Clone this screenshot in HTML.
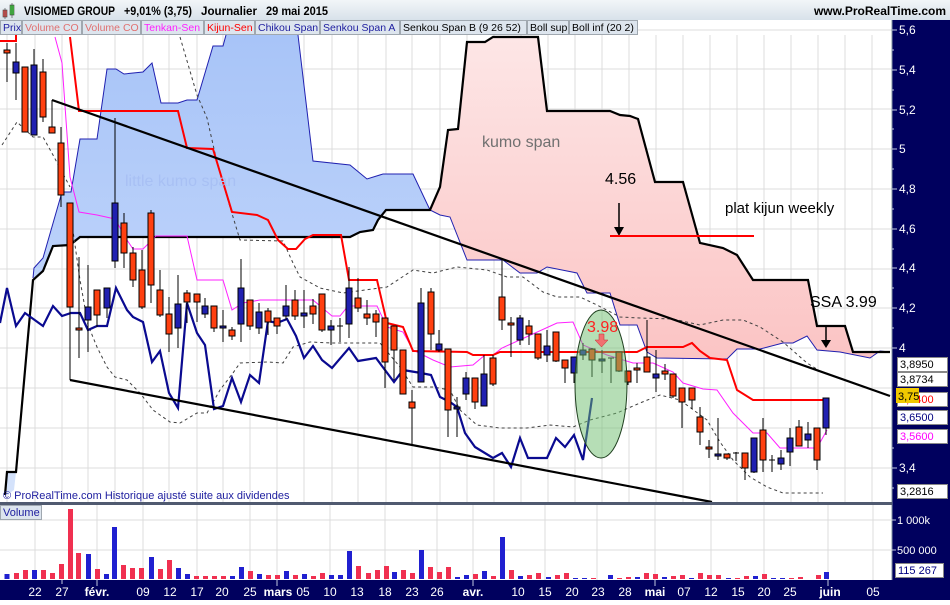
<!DOCTYPE html>
<html><head><meta charset="utf-8"><style>
body{margin:0;width:950px;height:600px;overflow:hidden;background:#fff;font-family:"Liberation Sans",Arial,sans-serif}
</style></head><body>
<svg width="950" height="600" xmlns="http://www.w3.org/2000/svg" font-family="Liberation Sans, Arial, sans-serif">
<defs>
<linearGradient id="hd" x1="0" y1="0" x2="0" y2="1"><stop offset="0" stop-color="#f2f6f8"/><stop offset="1" stop-color="#d8e2ea"/></linearGradient>
<linearGradient id="pk" x1="0" y1="0" x2="0" y2="1"><stop offset="0" stop-color="#fde6e6"/><stop offset="1" stop-color="#fbc4c4"/></linearGradient>
<linearGradient id="bl" x1="0" y1="0" x2="0" y2="1"><stop offset="0" stop-color="#a8c4f8"/><stop offset="1" stop-color="#bcd2fa"/></linearGradient>
</defs>
<rect x="0" y="0" width="950" height="600" fill="#fff"/>
<!-- header -->
<rect x="0" y="0" width="950" height="20" fill="url(#hd)"/>
<rect x="3" y="10" width="4" height="7" fill="#e05050" stroke="#404040" stroke-width="0.6"/><line x1="5" y1="8" x2="5" y2="19" stroke="#404040" stroke-width="0.6"/>
<rect x="10" y="5" width="4" height="10" fill="#40d040" stroke="#404040" stroke-width="0.6"/><line x1="12" y1="3" x2="12" y2="18" stroke="#404040" stroke-width="0.6"/>
<g font-size="12" font-weight="bold" fill="#000">
<text x="24" y="15" textLength="91" lengthAdjust="spacingAndGlyphs">VISIOMED GROUP</text>
<text x="124" y="15" textLength="68" lengthAdjust="spacingAndGlyphs">+9,01% (3,75)</text>
<text x="201" y="15" textLength="56" lengthAdjust="spacingAndGlyphs">Journalier</text>
<text x="266" y="15" textLength="62" lengthAdjust="spacingAndGlyphs">29 mai 2015</text>
</g>
<text x="946" y="15" font-size="12" font-weight="bold" fill="#000" text-anchor="end">www.ProRealTime.com</text>
<rect x="0" y="20" width="950" height="15" fill="#fff"/>
<!-- grid -->
<g stroke="#dcdcdc" stroke-width="1">
<line x1="0" y1="30" x2="892" y2="30"/><line x1="0" y1="69" x2="892" y2="69"/><line x1="0" y1="109" x2="892" y2="109"/><line x1="0" y1="149" x2="892" y2="149"/><line x1="0" y1="189" x2="892" y2="189"/><line x1="0" y1="229" x2="892" y2="229"/><line x1="0" y1="269" x2="892" y2="269"/><line x1="0" y1="308" x2="892" y2="308"/><line x1="0" y1="348" x2="892" y2="348"/><line x1="0" y1="388" x2="892" y2="388"/><line x1="0" y1="428" x2="892" y2="428"/><line x1="0" y1="468" x2="892" y2="468"/>
<line x1="7" y1="35" x2="7" y2="502"/><line x1="35" y1="35" x2="35" y2="502"/><line x1="62" y1="35" x2="62" y2="502"/><line x1="88" y1="35" x2="88" y2="502"/><line x1="115" y1="35" x2="115" y2="502"/><line x1="143" y1="35" x2="143" y2="502"/><line x1="169" y1="35" x2="169" y2="502"/><line x1="197" y1="35" x2="197" y2="502"/><line x1="223" y1="35" x2="223" y2="502"/><line x1="250" y1="35" x2="250" y2="502"/><line x1="277" y1="35" x2="277" y2="502"/><line x1="304" y1="35" x2="304" y2="502"/><line x1="332" y1="35" x2="332" y2="502"/><line x1="358" y1="35" x2="358" y2="502"/><line x1="386" y1="35" x2="386" y2="502"/><line x1="412" y1="35" x2="412" y2="502"/><line x1="440" y1="35" x2="440" y2="502"/><line x1="467" y1="35" x2="467" y2="502"/><line x1="494" y1="35" x2="494" y2="502"/><line x1="521" y1="35" x2="521" y2="502"/><line x1="548" y1="35" x2="548" y2="502"/><line x1="575" y1="35" x2="575" y2="502"/><line x1="602" y1="35" x2="602" y2="502"/><line x1="629" y1="35" x2="629" y2="502"/><line x1="656" y1="35" x2="656" y2="502"/><line x1="683" y1="35" x2="683" y2="502"/><line x1="710" y1="35" x2="710" y2="502"/><line x1="737" y1="35" x2="737" y2="502"/><line x1="764" y1="35" x2="764" y2="502"/><line x1="791" y1="35" x2="791" y2="502"/><line x1="818" y1="35" x2="818" y2="502"/><line x1="845" y1="35" x2="845" y2="502"/><line x1="872" y1="35" x2="872" y2="502"/>
</g>
<!-- blue kumo -->
<polygon fill="url(#bl)" points="33,278 34,268 43,258 62,192 71,192 80,139 97,139 107,69 116,69 124,74 143,72 152,63 161,103 178,103 187,100 197,100 213,46 223,46 226,35 298,35 313,161 350,165 367,179 383,174 413,174 430,210 386,210 378,220 373,230 360,232 350,237 80,237 70,245 53,246 43,271"/>
<polygon fill="#d4e2fb" points="7,472 16,472 14,490 7,495"/>
<!-- pink kumo -->
<polygon fill="url(#pk)" points="430,210 440,187 448,130 458,129 467,42 485,42 493,37 538,37 547,111 610,111 620,115 630,116 638,119 655,182 683,182 700,243 723,248 737,255 753,280 808,280 817,326 845,326 853,352 890,352 880,351 870,358 840,352 817,350 807,336 793,343 783,343 760,349 737,349 727,359 657,358 647,352 637,325 620,325 610,293 587,293 577,273 547,267 537,273 520,273 503,260 467,260 450,217 440,215"/>
<!-- SSA blue line -->
<polyline fill="none" stroke="#2020b0" stroke-width="1" points="33,278 34,268 43,258 62,192 71,192 80,139 97,139 107,69 116,69 124,74 143,72 152,63 161,103 178,103 187,100 197,100 213,46 223,46 226,35"/>
<polyline fill="none" stroke="#2020b0" stroke-width="1" points="298,35 313,161 350,165 367,179 383,174 413,174 430,210 440,215 450,217 467,260 503,260 520,273 537,273 547,267 577,273 587,293 610,293 620,325 637,325 647,352 657,358 727,359 737,349 760,349 783,343 793,343 807,336 817,350 840,352 870,358 880,351 890,352"/>
<!-- SSB black -->
<polyline fill="none" stroke="#000" stroke-width="2.2" points="5,495 7,472 16,472 33,280 43,271 53,246 70,245 80,237 350,237 360,232 373,230 378,220 386,210 430,210 440,187 448,130 458,129 467,42 485,42 493,37 538,37 547,111 610,111 620,115 630,116 638,119 655,182 683,182 700,243 723,248 737,255 753,280 808,280 817,326 845,326 853,352 890,352"/>
<!-- bollinger -->
<polyline fill="none" stroke="#404040" stroke-width="1" stroke-dasharray="3,3" points="2,145 17,122 33,137 43,137 53,155 70,187"/>
<polyline fill="none" stroke="#404040" stroke-width="1" stroke-dasharray="3,3" points="180,37 197,95 207,118 217,162 230,207 240,240 283,241 293,263 300,277 320,288 343,293 387,287 413,270 433,273 457,267 487,270 507,277 523,277 543,292 557,297 580,297 597,305 620,317 640,318 673,319 700,325 723,320 743,320 760,327 783,342 807,363 823,373"/>
<polyline fill="none" stroke="#404040" stroke-width="1" stroke-dasharray="3,3" points="70,210 80,280 88,325 97,347 107,367 115,377 127,380 140,393 153,410 170,422 180,423 197,413 207,413 220,390 233,373 240,363 267,362 283,363 293,347 310,342 333,343 380,343 400,367 413,387 433,387 450,390 460,410 477,425 500,428 527,428 550,425 573,427 590,420 617,413 640,403 660,395 680,400 707,420 720,442 733,460 750,477 767,487 783,493 823,493"/>
<!-- tenkan -->
<polyline fill="none" stroke="#ff20ff" stroke-width="1" points="55,37 62,63 70,177 79,212 97,215 115,219 127,240 133,249 143,249 156,236 187,236 197,280 223,280 232,310 243,303 260,300 313,300 332,316 340,316 348,306 377,306 387,327 403,332 413,350 433,360 450,367 473,365 485,355 493,355 502,348 557,323 573,322 583,345 607,355 633,363 653,363 673,372 683,383 703,389 717,390 733,413 753,433 767,433 780,448 817,448 827,430"/>
<!-- kijun -->
<polyline fill="none" stroke="#ff0000" stroke-width="2" points="0,41 16,41 16,33"/>
<polyline fill="none" stroke="#ff0000" stroke-width="2" points="70,37 79,111 178,111 187,148 213,149 232,212 257,215 268,220 278,240 288,249 296,249 305,239 313,235 341,235 349,280 377,280 387,323 403,327 413,351 467,352 473,355 493,355 500,352 637,352 647,347 683,347 692,343 700,351 710,358 727,360 737,390 753,400 827,400"/>
<!-- chikou -->
<polyline fill="none" stroke="#0a0a90" stroke-width="2.2" points="0,323 7,288 16,326 25,313 43,326 53,306 62,316 71,313 80,313 88,330 97,326 107,326 116,288 127,310 133,317 143,322 152,362 160,351 169,393 178,408 187,303 197,333 205,345 214,409 223,406 232,378 241,402 250,375 259,383 268,321 277,323 287,319 296,336 304,358 313,346 322,360 332,368 349,348 358,361 376,358 394,382 403,370 421,373 431,375 440,397 450,402 457,407 465,433 475,447 493,458 502,453 511,467 520,438 528,458 547,458 556,438 565,447 574,435 583,460 592,398"/>
<!-- trendlines -->
<line x1="52" y1="100" x2="890" y2="396" stroke="#000" stroke-width="2.2"/>
<line x1="70" y1="380" x2="712" y2="502" stroke="#000" stroke-width="2.2"/>
<!-- candles -->
<g stroke="#000" stroke-width="1">
<line x1="7" y1="43" x2="7" y2="82"/><rect x="4" y="50" width="6" height="3" fill="#ff4010"/>
<line x1="16" y1="43" x2="16" y2="100"/><rect x="13" y="62" width="6" height="11" fill="#2020b0"/>
<line x1="25" y1="67" x2="25" y2="132"/><rect x="22" y="67" width="6" height="65" fill="#ff4010"/>
<line x1="34" y1="49" x2="34" y2="135"/><rect x="31" y="65" width="6" height="70" fill="#2020b0"/>
<line x1="43" y1="59" x2="43" y2="122"/><rect x="40" y="72" width="6" height="45" fill="#ff4010"/>
<line x1="52" y1="100" x2="52" y2="133"/><rect x="49" y="127" width="6" height="6" fill="#ff4010"/>
<line x1="61" y1="127" x2="61" y2="207"/><rect x="58" y="143" width="6" height="52" fill="#ff4010"/>
<line x1="70" y1="203" x2="70" y2="380"/><rect x="67" y="203" width="6" height="104" fill="#ff4010"/>
<line x1="79" y1="257" x2="79" y2="358"/><rect x="76" y="328" width="6" height="2" fill="#ff4010"/>
<line x1="88" y1="265" x2="88" y2="352"/><rect x="85" y="307" width="6" height="13" fill="#2020b0"/>
<line x1="97" y1="290" x2="97" y2="327"/><rect x="94" y="290" width="6" height="25" fill="#ff4010"/>
<line x1="107" y1="288" x2="107" y2="318"/><rect x="104" y="288" width="6" height="20" fill="#2020b0"/>
<line x1="115" y1="118" x2="115" y2="268"/><rect x="112" y="203" width="6" height="58" fill="#2020b0"/>
<line x1="124" y1="213" x2="124" y2="268"/><rect x="121" y="223" width="6" height="30" fill="#ff4010"/>
<line x1="133" y1="247" x2="133" y2="287"/><rect x="130" y="253" width="6" height="27" fill="#ff4010"/>
<line x1="142" y1="250" x2="142" y2="309"/><rect x="139" y="270" width="6" height="37" fill="#ff4010"/>
<line x1="151" y1="210" x2="151" y2="303"/><rect x="148" y="213" width="6" height="72" fill="#ff4010"/>
<line x1="160" y1="270" x2="160" y2="317"/><rect x="157" y="290" width="6" height="25" fill="#ff4010"/>
<line x1="169" y1="297" x2="169" y2="352"/><rect x="166" y="314" width="6" height="20" fill="#ff4010"/>
<line x1="178" y1="275" x2="178" y2="348"/><rect x="175" y="304" width="6" height="24" fill="#2020b0"/>
<line x1="187" y1="290" x2="187" y2="323"/><rect x="184" y="293" width="6" height="9" fill="#ff4010"/>
<line x1="197" y1="294" x2="197" y2="322"/><rect x="194" y="294" width="6" height="8" fill="#ff4010"/>
<line x1="205" y1="298" x2="205" y2="318"/><rect x="202" y="306" width="6" height="8" fill="#2020b0"/>
<line x1="214" y1="306" x2="214" y2="332"/><rect x="211" y="306" width="6" height="22" fill="#ff4010"/>
<line x1="223" y1="310" x2="223" y2="342"/><rect x="220" y="326" width="6" height="2" fill="#2020b0"/>
<line x1="232" y1="327" x2="232" y2="340"/><rect x="229" y="330" width="6" height="6" fill="#ff4010"/>
<line x1="241" y1="259" x2="241" y2="342"/><rect x="238" y="288" width="6" height="36" fill="#2020b0"/>
<line x1="250" y1="300" x2="250" y2="330"/><rect x="247" y="300" width="6" height="26" fill="#ff4010"/>
<line x1="259" y1="303" x2="259" y2="334"/><rect x="256" y="312" width="6" height="16" fill="#2020b0"/>
<line x1="268" y1="308" x2="268" y2="335"/><rect x="265" y="311" width="6" height="11" fill="#ff4010"/>
<line x1="277" y1="318" x2="277" y2="334"/><rect x="274" y="318" width="6" height="8" fill="#ff4010"/>
<line x1="286" y1="285" x2="286" y2="320"/><rect x="283" y="306" width="6" height="10" fill="#2020b0"/>
<line x1="295" y1="290" x2="295" y2="320"/><rect x="292" y="300" width="6" height="16" fill="#ff4010"/>
<line x1="304" y1="290" x2="304" y2="328"/><rect x="301" y="313" width="6" height="3" fill="#2020b0"/>
<line x1="313" y1="299" x2="313" y2="324"/><rect x="310" y="306" width="6" height="8" fill="#ff4010"/>
<line x1="322" y1="294" x2="322" y2="332"/><rect x="319" y="294" width="6" height="36" fill="#ff4010"/>
<line x1="331" y1="320" x2="331" y2="345"/><rect x="328" y="326" width="6" height="4" fill="#2020b0"/>
<line x1="340" y1="318" x2="340" y2="342"/><line x1="337" y1="326" x2="343" y2="326"/>
<line x1="349" y1="267" x2="349" y2="338"/><rect x="346" y="288" width="6" height="36" fill="#2020b0"/>
<line x1="358" y1="278" x2="358" y2="312"/><rect x="355" y="298" width="6" height="10" fill="#ff4010"/>
<line x1="367" y1="300" x2="367" y2="325"/><rect x="364" y="314" width="6" height="4" fill="#ff4010"/>
<line x1="376" y1="310" x2="376" y2="337"/><rect x="373" y="314" width="6" height="8" fill="#ff4010"/>
<line x1="385" y1="318" x2="385" y2="388"/><rect x="382" y="318" width="6" height="44" fill="#ff4010"/>
<line x1="394" y1="326" x2="394" y2="380"/><rect x="391" y="326" width="6" height="24" fill="#ff4010"/>
<line x1="403" y1="350" x2="403" y2="394"/><rect x="400" y="350" width="6" height="44" fill="#ff4010"/>
<line x1="412" y1="390" x2="412" y2="445"/><rect x="409" y="402" width="6" height="6" fill="#ff4010"/>
<line x1="421" y1="288" x2="421" y2="382"/><rect x="418" y="303" width="6" height="79" fill="#2020b0"/>
<line x1="431" y1="288" x2="431" y2="350"/><rect x="428" y="292" width="6" height="42" fill="#ff4010"/>
<line x1="439" y1="330" x2="439" y2="352"/><rect x="436" y="344" width="6" height="6" fill="#2020b0"/>
<line x1="448" y1="349" x2="448" y2="437"/><rect x="445" y="349" width="6" height="61" fill="#ff4010"/>
<line x1="457" y1="397" x2="457" y2="437"/><rect x="454" y="407" width="6" height="2" fill="#2020b0"/>
<line x1="466" y1="372" x2="466" y2="400"/><rect x="463" y="378" width="6" height="16" fill="#2020b0"/>
<line x1="475" y1="378" x2="475" y2="409"/><rect x="472" y="378" width="6" height="24" fill="#ff4010"/>
<line x1="484" y1="355" x2="484" y2="406"/><rect x="481" y="374" width="6" height="32" fill="#2020b0"/>
<line x1="493" y1="355" x2="493" y2="386"/><rect x="490" y="358" width="6" height="26" fill="#ff4010"/>
<line x1="502" y1="260" x2="502" y2="330"/><rect x="499" y="297" width="6" height="23" fill="#ff4010"/>
<line x1="511" y1="317" x2="511" y2="357"/><rect x="508" y="323" width="6" height="2" fill="#ff4010"/>
<line x1="520" y1="315" x2="520" y2="345"/><rect x="517" y="318" width="6" height="22" fill="#2020b0"/>
<line x1="529" y1="320" x2="529" y2="345"/><rect x="526" y="326" width="6" height="8" fill="#ff4010"/>
<line x1="538" y1="334" x2="538" y2="360"/><rect x="535" y="334" width="6" height="24" fill="#ff4010"/>
<line x1="547" y1="330" x2="547" y2="362"/><rect x="544" y="346" width="6" height="9" fill="#2020b0"/>
<line x1="556" y1="332" x2="556" y2="362"/><rect x="553" y="332" width="6" height="29" fill="#ff4010"/>
<line x1="565" y1="360" x2="565" y2="383"/><rect x="562" y="360" width="6" height="8" fill="#ff4010"/>
<line x1="574" y1="357" x2="574" y2="383"/><rect x="571" y="357" width="6" height="16" fill="#2020b0"/>
<line x1="583" y1="343" x2="583" y2="360"/><rect x="580" y="350" width="6" height="5" fill="#2020b0"/>
<line x1="592" y1="348" x2="592" y2="377"/><rect x="589" y="349" width="6" height="11" fill="#ff4010"/>
<line x1="602" y1="350" x2="602" y2="373"/><rect x="599" y="359" width="6" height="2" fill="#2020b0"/>
<line x1="611" y1="358" x2="611" y2="383"/><line x1="608" y1="358" x2="614" y2="358"/>
<line x1="619" y1="352" x2="619" y2="372"/><rect x="616" y="352" width="6" height="19" fill="#ff4010"/>
<line x1="628" y1="371" x2="628" y2="385"/><rect x="625" y="371" width="6" height="11" fill="#ff4010"/>
<line x1="637" y1="363" x2="637" y2="383"/><rect x="634" y="368" width="6" height="2" fill="#ff4010"/>
<line x1="647" y1="320" x2="647" y2="372"/><rect x="644" y="357" width="6" height="15" fill="#ff4010"/>
<line x1="656" y1="350" x2="656" y2="392"/><rect x="653" y="374" width="6" height="4" fill="#2020b0"/>
<line x1="665" y1="364" x2="665" y2="380"/><rect x="662" y="371" width="6" height="3" fill="#ff4010"/>
<line x1="673" y1="374" x2="673" y2="398"/><rect x="670" y="374" width="6" height="22" fill="#ff4010"/>
<line x1="682" y1="388" x2="682" y2="428"/><rect x="679" y="388" width="6" height="14" fill="#ff4010"/>
<line x1="692" y1="388" x2="692" y2="409"/><rect x="689" y="388" width="6" height="12" fill="#ff4010"/>
<line x1="700" y1="407" x2="700" y2="445"/><rect x="697" y="417" width="6" height="15" fill="#ff4010"/>
<line x1="709" y1="440" x2="709" y2="458"/><rect x="706" y="447" width="6" height="2" fill="#ff4010"/>
<line x1="718" y1="418" x2="718" y2="460"/><rect x="715" y="454" width="6" height="2" fill="#2020b0"/>
<line x1="727" y1="454" x2="727" y2="460"/><rect x="724" y="454" width="6" height="4" fill="#ff4010"/>
<line x1="736" y1="452" x2="736" y2="461"/><line x1="733" y1="453" x2="739" y2="453"/>
<line x1="745" y1="453" x2="745" y2="480"/><rect x="742" y="453" width="6" height="15" fill="#ff4010"/>
<line x1="754" y1="438" x2="754" y2="473"/><rect x="751" y="438" width="6" height="34" fill="#2020b0"/>
<line x1="763" y1="418" x2="763" y2="472"/><rect x="760" y="430" width="6" height="30" fill="#ff4010"/>
<line x1="772" y1="455" x2="772" y2="472"/><line x1="769" y1="460" x2="775" y2="460"/>
<line x1="781" y1="450" x2="781" y2="470"/><rect x="778" y="458" width="6" height="6" fill="#2020b0"/>
<line x1="790" y1="428" x2="790" y2="466"/><rect x="787" y="438" width="6" height="14" fill="#2020b0"/>
<line x1="799" y1="420" x2="799" y2="446"/><rect x="796" y="427" width="6" height="19" fill="#ff4010"/>
<line x1="808" y1="422" x2="808" y2="448"/><rect x="805" y="434" width="6" height="6" fill="#2020b0"/>
<line x1="817" y1="428" x2="817" y2="470"/><rect x="814" y="428" width="6" height="32" fill="#ff4010"/>
<line x1="826" y1="398" x2="826" y2="435"/><rect x="823" y="398" width="6" height="30" fill="#2020b0"/>
</g>
<!-- annotations -->
<text x="125" y="186" font-size="16" fill="#a8c0f4">little kumo span</text>
<text x="482" y="147" font-size="16" fill="#707070">kumo span</text>
<text x="605" y="184" font-size="16" fill="#000">4.56</text>
<line x1="619" y1="203" x2="619" y2="232" stroke="#000" stroke-width="1.5"/><polygon points="614,227 624,227 619,236" fill="#000"/>
<line x1="610" y1="236" x2="754" y2="236" stroke="#ff0000" stroke-width="2"/>
<text x="725" y="213" font-size="15" fill="#000">plat kijun weekly</text>
<text x="810" y="307" font-size="16" fill="#000">SSA 3.99</text>
<line x1="826" y1="327" x2="826" y2="344" stroke="#000" stroke-width="1.5"/><polygon points="821,340 831,340 826,348" fill="#000"/>
<ellipse cx="601" cy="384" rx="26" ry="74" fill="rgba(110,190,110,0.5)" stroke="#204020" stroke-width="1"/>
<text x="587" y="332" font-size="16" fill="#ff2020">3.98</text>
<polygon points="599,334 604,334 604,340 608,340 601.5,347 595,340 599,340" fill="#f07070" stroke="#c03030" stroke-width="0.5"/>
<!-- legend row -->
<g font-size="10.5">
<rect x="0.5" y="20.5" width="21" height="14" fill="#dde5ee" stroke="#a0a8b0"/><text x="3" y="31" fill="#2020a0">Prix</text>
<rect x="22.5" y="20.5" width="59" height="14" fill="#dde5ee" stroke="#a0a8b0"/><text x="25" y="31" fill="#e07070">Volume CO</text>
<rect x="82.5" y="20.5" width="58" height="14" fill="#dde5ee" stroke="#a0a8b0"/><text x="85" y="31" fill="#e07070">Volume CO</text>
<rect x="141.5" y="20.5" width="62" height="14" fill="#dde5ee" stroke="#a0a8b0"/><text x="144" y="31" fill="#ff20ff">Tenkan-Sen</text>
<rect x="204.5" y="20.5" width="50" height="14" fill="#dde5ee" stroke="#a0a8b0"/><text x="207" y="31" fill="#ff0000">Kijun-Sen</text>
<rect x="255.5" y="20.5" width="64" height="14" fill="#dde5ee" stroke="#a0a8b0"/><text x="258" y="31" fill="#2020a0">Chikou Span</text>
<rect x="320.5" y="20.5" width="79" height="14" fill="#dde5ee" stroke="#a0a8b0"/><text x="323" y="31" fill="#2020a0">Senkou Span A</text>
<rect x="400.5" y="20.5" width="126" height="14" fill="#dde5ee" stroke="#a0a8b0"/><text x="403" y="31" fill="#000">Senkou Span B (9 26 52)</text>
<rect x="527.5" y="20.5" width="41" height="14" fill="#dde5ee" stroke="#a0a8b0"/><text x="530" y="31" fill="#000">Boll sup</text>
<rect x="569.5" y="20.5" width="68" height="14" fill="#dde5ee" stroke="#a0a8b0"/><text x="572" y="31" fill="#000">Boll inf (20 2)</text>
</g>
<text x="3" y="499" font-size="11" fill="#2020a0">© ProRealTime.com Historique ajusté suite aux dividendes</text>
<!-- right axis -->
<rect x="892" y="20" width="58" height="580" fill="#00005e"/>
<line x1="892" y1="20" x2="892" y2="600" stroke="#8090a0"/>
<g stroke="#c0c8e0"><line x1="892" y1="30" x2="897" y2="30"/><line x1="892" y1="70" x2="897" y2="70"/><line x1="892" y1="110" x2="897" y2="110"/><line x1="892" y1="149" x2="897" y2="149"/><line x1="892" y1="189" x2="897" y2="189"/><line x1="892" y1="229" x2="897" y2="229"/><line x1="892" y1="268" x2="897" y2="268"/><line x1="892" y1="308" x2="897" y2="308"/><line x1="892" y1="348" x2="897" y2="348"/><line x1="892" y1="468" x2="897" y2="468"/><line x1="892" y1="50" x2="894" y2="50"/><line x1="892" y1="90" x2="894" y2="90"/><line x1="892" y1="129" x2="894" y2="129"/><line x1="892" y1="169" x2="894" y2="169"/><line x1="892" y1="209" x2="894" y2="209"/><line x1="892" y1="249" x2="894" y2="249"/><line x1="892" y1="288" x2="894" y2="288"/><line x1="892" y1="328" x2="894" y2="328"/><line x1="892" y1="448" x2="894" y2="448"/><line x1="892" y1="488" x2="894" y2="488"/></g>
<g font-size="12" fill="#fff">
<text x="899" y="34">5,6</text><text x="899" y="74">5,4</text><text x="899" y="114">5,2</text><text x="899" y="153">5</text><text x="899" y="193">4,8</text><text x="899" y="233">4,6</text><text x="899" y="272">4,4</text><text x="899" y="312">4,2</text><text x="899" y="352">4</text><text x="899" y="472">3,4</text>
</g>
<g font-size="11">
<rect x="897.5" y="357.5" width="50" height="14" fill="#fff" stroke="#888"/><text x="900" y="368" fill="#000">3,8950</text>
<rect x="897.5" y="372.5" width="50" height="14" fill="#fff" stroke="#888"/><text x="900" y="383" fill="#000">3,8734</text>
<rect x="897.5" y="392.5" width="50" height="14" fill="#fff" stroke="#888"/><text x="900" y="403" fill="#ff0000">3,7400</text>
<rect x="896" y="388" width="23" height="15" fill="#f0c800"/><text x="898" y="400" fill="#000">3,75</text>
<rect x="897.5" y="410.5" width="50" height="14" fill="#fff" stroke="#888"/><text x="900" y="421" fill="#000080">3,6500</text>
<rect x="897.5" y="429.5" width="50" height="14" fill="#fff" stroke="#888"/><text x="900" y="440" fill="#ff00ff">3,5600</text>
<rect x="897.5" y="484.5" width="50" height="14" fill="#fff" stroke="#888"/><text x="900" y="495" fill="#000">3,2816</text>
</g>
<!-- separator -->
<rect x="0" y="502" width="892" height="3" fill="#505a70"/>
<!-- volume panel grid -->
<g stroke="#dcdcdc"><line x1="0" y1="520" x2="892" y2="520"/><line x1="0" y1="550" x2="892" y2="550"/>
<line x1="35" y1="505" x2="35" y2="580"/><line x1="97" y1="505" x2="97" y2="580"/><line x1="143" y1="505" x2="143" y2="580"/><line x1="197" y1="505" x2="197" y2="580"/><line x1="250" y1="505" x2="250" y2="580"/><line x1="277" y1="505" x2="277" y2="580"/><line x1="330" y1="505" x2="330" y2="580"/><line x1="385" y1="505" x2="385" y2="580"/><line x1="437" y1="505" x2="437" y2="580"/><line x1="473" y1="505" x2="473" y2="580"/><line x1="545" y1="505" x2="545" y2="580"/><line x1="597" y1="505" x2="597" y2="580"/><line x1="655" y1="505" x2="655" y2="580"/><line x1="711" y1="505" x2="711" y2="580"/><line x1="764" y1="505" x2="764" y2="580"/><line x1="828" y1="505" x2="828" y2="580"/><line x1="873" y1="505" x2="873" y2="580"/></g>
<rect x="0.5" y="505.5" width="41" height="14" fill="#dde5ee" stroke="#a0a8b0"/><text x="3" y="516" font-size="11" fill="#2020a0">Volume</text>
<g>
<rect x="4.5" y="574" width="5" height="5" fill="#2020d0"/><rect x="14" y="573" width="5" height="6" fill="#f03050"/><rect x="23" y="570" width="5" height="9" fill="#f03050"/><rect x="32" y="570" width="5" height="9" fill="#2020d0"/><rect x="41" y="570" width="5" height="9" fill="#f03050"/><rect x="50" y="573" width="5" height="6" fill="#f03050"/><rect x="59" y="564" width="5" height="15" fill="#f03050"/><rect x="68" y="509" width="5" height="70" fill="#f03050"/><rect x="76" y="553" width="5" height="26" fill="#f03050"/><rect x="86" y="554" width="5" height="25" fill="#2020d0"/><rect x="95" y="569" width="5" height="10" fill="#f03050"/><rect x="104" y="574" width="5" height="5" fill="#2020d0"/><rect x="112" y="527" width="5" height="52" fill="#2020d0"/><rect x="121" y="565" width="5" height="14" fill="#f03050"/><rect x="130" y="568" width="5" height="11" fill="#f03050"/><rect x="139" y="568" width="5" height="11" fill="#f03050"/><rect x="149" y="557" width="5" height="22" fill="#2020d0"/><rect x="158" y="569" width="5" height="10" fill="#f03050"/><rect x="167" y="560" width="5" height="19" fill="#f03050"/><rect x="176" y="568" width="5" height="11" fill="#2020d0"/><rect x="185" y="574" width="5" height="5" fill="#2020d0"/><rect x="194" y="576" width="5" height="3" fill="#f03050"/><rect x="203" y="576" width="5" height="3" fill="#f03050"/><rect x="212" y="576" width="5" height="3" fill="#f03050"/><rect x="221" y="576" width="5" height="3" fill="#f03050"/><rect x="230" y="576" width="5" height="3" fill="#2020d0"/><rect x="239" y="567" width="5" height="12" fill="#2020d0"/><rect x="248" y="571" width="5" height="8" fill="#f03050"/><rect x="257" y="574" width="5" height="5" fill="#2020d0"/><rect x="266" y="575" width="5" height="4" fill="#f03050"/><rect x="275" y="575" width="5" height="4" fill="#f03050"/><rect x="284" y="571" width="5" height="8" fill="#2020d0"/><rect x="293" y="575" width="5" height="4" fill="#f03050"/><rect x="302" y="574" width="5" height="5" fill="#2020d0"/><rect x="311" y="576" width="5" height="3" fill="#f03050"/><rect x="320" y="573" width="5" height="6" fill="#f03050"/><rect x="329" y="575" width="5" height="4" fill="#2020d0"/><rect x="338" y="575" width="5" height="4" fill="#2020d0"/><rect x="347" y="551" width="5" height="28" fill="#2020d0"/><rect x="356" y="566" width="5" height="13" fill="#f03050"/><rect x="366" y="573" width="5" height="6" fill="#f03050"/><rect x="375" y="570" width="5" height="9" fill="#f03050"/><rect x="384" y="566" width="5" height="13" fill="#f03050"/><rect x="392" y="572" width="5" height="7" fill="#2020d0"/><rect x="401" y="570" width="5" height="9" fill="#f03050"/><rect x="410" y="573" width="5" height="6" fill="#f03050"/><rect x="419" y="550" width="5" height="29" fill="#2020d0"/><rect x="428" y="567" width="5" height="12" fill="#f03050"/><rect x="437" y="572" width="5" height="7" fill="#f03050"/><rect x="446" y="567" width="5" height="12" fill="#f03050"/><rect x="455" y="577" width="5" height="2" fill="#2020d0"/><rect x="464" y="575" width="5" height="4" fill="#2020d0"/><rect x="473" y="574" width="5" height="5" fill="#f03050"/><rect x="482" y="571" width="5" height="8" fill="#2020d0"/><rect x="491" y="576" width="5" height="3" fill="#f03050"/><rect x="500" y="537" width="5" height="42" fill="#2020d0"/><rect x="509" y="570" width="5" height="9" fill="#f03050"/><rect x="518" y="576" width="5" height="3" fill="#2020d0"/><rect x="527" y="575" width="5" height="4" fill="#f03050"/><rect x="536" y="573" width="5" height="6" fill="#f03050"/><rect x="546" y="577" width="5" height="2" fill="#2020d0"/><rect x="555" y="575" width="5" height="4" fill="#f03050"/><rect x="564" y="573" width="5" height="6" fill="#f03050"/><rect x="573" y="578" width="5" height="1" fill="#2020d0"/><rect x="582" y="578" width="5" height="1" fill="#2020d0"/><rect x="591" y="578" width="5" height="1" fill="#f03050"/><rect x="608" y="575" width="5" height="4" fill="#2020d0"/><rect x="617" y="578" width="5" height="1" fill="#f03050"/><rect x="626" y="577" width="5" height="2" fill="#f03050"/><rect x="635" y="577" width="5" height="2" fill="#2020d0"/><rect x="644" y="573" width="5" height="6" fill="#f03050"/><rect x="653" y="574" width="5" height="5" fill="#f03050"/><rect x="662" y="577" width="5" height="2" fill="#2020d0"/><rect x="671" y="576" width="5" height="3" fill="#f03050"/><rect x="680" y="575" width="5" height="4" fill="#f03050"/><rect x="689" y="578" width="5" height="1" fill="#2020d0"/><rect x="698" y="573" width="5" height="6" fill="#f03050"/><rect x="707" y="575" width="5" height="4" fill="#f03050"/><rect x="716" y="575" width="5" height="4" fill="#f03050"/><rect x="726" y="578" width="5" height="1" fill="#2020d0"/><rect x="735" y="578" width="5" height="1" fill="#f03050"/><rect x="744" y="576" width="5" height="3" fill="#f03050"/><rect x="753" y="576" width="5" height="3" fill="#2020d0"/><rect x="762" y="574" width="5" height="5" fill="#f03050"/><rect x="771" y="578" width="5" height="1" fill="#2020d0"/><rect x="780" y="578" width="5" height="1" fill="#2020d0"/><rect x="789" y="578" width="5" height="1" fill="#f03050"/><rect x="798" y="577" width="5" height="2" fill="#f03050"/><rect x="816" y="575" width="5" height="4" fill="#f03050"/><rect x="824" y="572" width="5" height="7" fill="#2020d0"/>
</g>
<g font-size="11" fill="#fff"><text x="897" y="524">1 000k</text><text x="897" y="554">500 000</text></g>
<line x1="892" y1="520" x2="896" y2="520" stroke="#c0c8e0"/><line x1="892" y1="550" x2="896" y2="550" stroke="#c0c8e0"/>
<rect x="895.5" y="563.5" width="48" height="14" fill="#fff" stroke="#888"/><text x="898" y="574" font-size="11" fill="#000080">115 267</text>
<!-- date axis -->
<rect x="0" y="580" width="950" height="20" fill="#00005e"/>
<g stroke="#c0c8e0"><line x1="62" y1="580" x2="62" y2="584"/><line x1="97" y1="580" x2="97" y2="586"/><line x1="277" y1="580" x2="277" y2="586"/><line x1="473" y1="580" x2="473" y2="586"/><line x1="655" y1="580" x2="655" y2="586"/><line x1="828" y1="580" x2="828" y2="586"/></g>
<g font-size="12" fill="#fff" text-anchor="middle">
<text x="35" y="596">22</text><text x="62" y="596">27</text><text x="97" y="596" font-weight="bold">févr.</text><text x="143" y="596">09</text><text x="170" y="596">12</text><text x="197" y="596">17</text><text x="222" y="596">20</text><text x="250" y="596">25</text><text x="278" y="596" font-weight="bold">mars</text><text x="303" y="596">05</text><text x="330" y="596">10</text><text x="357" y="596">13</text><text x="385" y="596">18</text><text x="412" y="596">23</text><text x="437" y="596">26</text><text x="473" y="596" font-weight="bold">avr.</text><text x="518" y="596">10</text><text x="545" y="596">15</text><text x="572" y="596">20</text><text x="598" y="596">23</text><text x="625" y="596">28</text><text x="655" y="596" font-weight="bold">mai</text><text x="684" y="596">07</text><text x="711" y="596">12</text><text x="738" y="596">15</text><text x="764" y="596">20</text><text x="790" y="596">25</text><text x="830" y="596" font-weight="bold">juin</text><text x="873" y="596">05</text>
</g>
</svg>
</body></html>
